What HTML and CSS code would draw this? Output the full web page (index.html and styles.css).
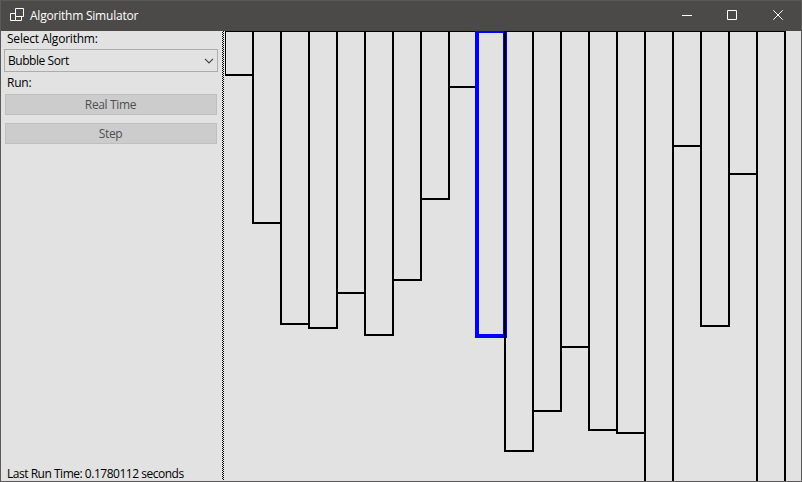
FILE: index.html
```
<!DOCTYPE html>
<html lang="en">
<head>
<meta charset="utf-8">
<title>Algorithm Simulator</title>
<link rel="stylesheet" href="styles.css">
</head>
<body>
<div class="window">
  <header class="titlebar">
    <svg class="app-icon" width="16" height="16" viewBox="0 0 16 16"><path d="M6.500 .5h8v8h-8zM6.500 5.500h-5v7h5M6.500 8.500v4h6v-4"/></svg>
    <span class="title">Algorithm Simulator</span>
    <div class="controls">
      <svg width="45" height="30" viewBox="0 0 45 30"><path d="M17 14.500h10"/></svg>
      <svg width="45" height="30" viewBox="0 0 45 30"><path d="M17.500 9.500h9v9h-9z"/></svg>
      <svg width="45" height="30" viewBox="0 0 45 30"><path d="M18.300 9.300l9.400 9.400M27.700 9.300l-9.400 9.400"/></svg>
    </div>
  </header>
  <main class="content">
    <aside class="sidebar">
      <label class="label">Select Algorithm:</label>
      <div class="combo"><span>Bubble Sort</span><svg width="10" height="6" viewBox="0 0 10 6"><path d="M1 .8l4 4 4-4"/></svg></div>
      <label class="label run">Run:</label>
      <button class="button" disabled>Real Time</button>
      <button class="button" disabled>Step</button>
      <div class="status">Last Run Time: 0.1780112 seconds</div>
    </aside>
    <div class="splitter"></div>
    <svg class="chart" width="576" height="450" viewBox="0 0 576 450">
      <rect x="0" width="28" height="44"/>
      <rect x="28" width="28" height="192"/>
      <rect x="56" width="28" height="293"/>
      <rect x="84" width="28" height="297"/>
      <rect x="112" width="28" height="262"/>
      <rect x="140" width="28" height="304"/>
      <rect x="168" width="28" height="249"/>
      <rect x="196" width="28" height="168"/>
      <rect x="224" width="28" height="56"/>
      <rect class="active" x="252" width="28" height="305"/>
      <rect x="280" width="28" height="420"/>
      <rect x="308" width="28" height="380"/>
      <rect x="336" width="28" height="316"/>
      <rect x="364" width="28" height="399"/>
      <rect x="392" width="28" height="402"/>
      <rect x="420" width="28" height="470"/>
      <rect x="448" width="28" height="115"/>
      <rect x="476" width="28" height="295"/>
      <rect x="504" width="28" height="143"/>
      <rect x="532" width="28" height="470"/>
    </svg>
  </main>
</div>
</body>
</html>
```
FILE: styles.css
```
* { box-sizing: border-box; }
body {
  margin: 0;
  font: 12px/16px "Open Sans", "Noto Sans", sans-serif;
  letter-spacing: -0.4px;
  color: #000;
}
svg { display: block; fill: none; }
.window {
  display: flex;
  flex-direction: column;
  width: 802px;
  height: 482px;
  border: 1px solid #5b5959;
  background: #e2e2e2;
}
.titlebar {
  display: flex;
  flex: none;
  height: 30px;
  padding: 0 1px 0 8px;
  background: #4c4a48;
  color: #fff;
  letter-spacing: -0.22px;
}
.app-icon { margin: 7px 5px 0 0; stroke: #fff; }
.title { padding-top: 7px; }
.controls { display: flex; margin-left: auto; stroke: #fff; }
.content { display: flex; flex: 1; min-height: 0; }
.sidebar {
  display: flex;
  flex-direction: column;
  width: 221px;
  padding: 0 4px 0 3px;
}
.label { height: 18px; padding-left: 3px; letter-spacing: -0.22px; }
.label.run { padding-top: 3px; height: 22px; }
.combo {
  display: flex;
  align-items: center;
  justify-content: space-between;
  height: 23px;
  padding: 0 3px;
  border: 1px solid #adadad;
  letter-spacing: -0.45px;
}
.combo svg { stroke: #444; stroke-width: 1.2; }
.button {
  height: 21px;
  margin: 0 1px 8px;
  padding: 0 1px 0 0;
  border: 1px solid #bfbfbf;
  background: #ccc;
  color: #505050;
  font: inherit;
  letter-spacing: -0.35px;
}
.status {
  height: 15px;
  margin-top: auto;
  padding-left: 3px;
  letter-spacing: -0.48px;
}
.splitter {
  width: 2px;
  height: 449px;
  margin-right: 1px;
  background: conic-gradient(#000 25%, #e2e2e2 0 50%, #000 0 75%, #e2e2e2 0) 0 0 / 2px 2px;
}
.chart { flex: none; overflow: hidden; stroke: #000; stroke-width: 2; }
.chart .active { stroke: #00f; stroke-width: 4; }
```
